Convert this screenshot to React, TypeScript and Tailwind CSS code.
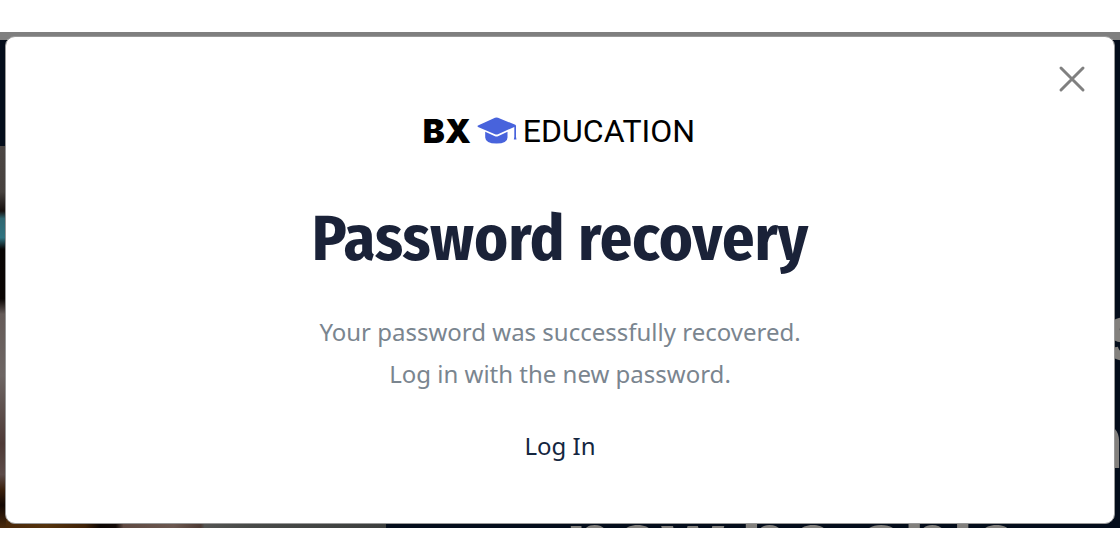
import React from "react";

function Backdrop() {
  return (
    <svg
      aria-hidden="true"
      viewBox="0 0 1120 496"
      preserveAspectRatio="xMidYMid slice"
      className="absolute inset-0 h-full w-full"
    >
      <defs>
        <linearGradient id="photo" x1="0" y1="114" x2="0" y2="496" gradientUnits="userSpaceOnUse">
          <stop offset="0" stopColor="#4b4643" />
          <stop offset="0.12" stopColor="#46413e" />
          <stop offset="0.17" stopColor="#15100e" />
          <stop offset="0.19" stopColor="#2f6670" />
          <stop offset="0.24" stopColor="#2f7380" />
          <stop offset="0.27" stopColor="#080504" />
          <stop offset="0.4" stopColor="#0a0503" />
          <stop offset="0.44" stopColor="#655b58" />
          <stop offset="0.6" stopColor="#6d6563" />
          <stop offset="0.78" stopColor="#4e3a36" />
          <stop offset="0.86" stopColor="#5c4b48" />
          <stop offset="0.9" stopColor="#3a200c" />
          <stop offset="0.94" stopColor="#130703" />
          <stop offset="1" stopColor="#4a2a0c" />
        </linearGradient>
        <linearGradient id="floor" x1="0" y1="0" x2="386" y2="0" gradientUnits="userSpaceOnUse">
          <stop offset="0" stopColor="#482709" />
          <stop offset="0.12" stopColor="#55330d" />
          <stop offset="0.22" stopColor="#3f2208" />
          <stop offset="0.26" stopColor="#0d0603" />
          <stop offset="0.3" stopColor="#120a07" />
          <stop offset="0.32" stopColor="#5f4a42" />
          <stop offset="0.45" stopColor="#6b5850" />
          <stop offset="0.52" stopColor="#4d3b34" />
          <stop offset="0.53" stopColor="#535452" />
          <stop offset="0.65" stopColor="#484a48" />
          <stop offset="1" stopColor="#3d3f3e" />
        </linearGradient>
      </defs>
      <rect width="1120" height="496" fill="#040d1b" />
      <rect width="1120" height="8" fill="#7f7f7f" />
      <rect y="114" width="386" height="382" fill="url(#photo)" />
      <rect x="6" y="480" width="380" height="16" fill="url(#floor)" />
      <g fill="#82807d" fontFamily="Inter, sans-serif" fontWeight="700" fontSize="77">
        <text x="1126" y="328" textAnchor="middle">s</text>
        <text x="1100" y="436" textAnchor="middle">n</text>
        <text x="566" y="536">now</text>
        <text x="741" y="536">be</text>
        <text x="859" y="536">able</text>
      </g>
    </svg>
  );
}

function Logo() {
  return (
    <div className="flex h-10 items-center justify-center pr-0.5 text-black">
      <span className="font-[Inter,sans-serif] text-[33px] leading-10 font-black">BX</span>
      <svg viewBox="0 0 40 28" className="mx-1.5 h-7 w-10" fill="#4863dc" aria-hidden="true">
        <path d="M1 8.500 18 .8Q19.500 .2 21 .8L38.300 7.800Q39 8.200 39 9V20L39.500 22.500H36.800L37.300 20V9.900L21 17.200Q19.500 17.800 18 17.200L1 9.900Q0 9.200 1 8.500Z" />
        <path d="M8.200 14.800 18 19.200Q19.500 19.800 21 19.200L30.500 14.800V20.500Q30.500 26.500 19.500 26.500T8.200 20.500Z" />
      </svg>
      <span className="font-[Roboto,sans-serif] text-[32px] leading-10">EDUCATION</span>
    </div>
  );
}

export default function App() {
  return (
    <main className="min-h-screen bg-white py-8 font-['Noto_Sans',sans-serif]">
      <div className="relative overflow-hidden px-[5px] pt-1 pb-1">
        <Backdrop />
        <section
          role="dialog"
          aria-labelledby="dialog-title"
          className="relative rounded-[10px] border border-[#999999] bg-white px-6 pt-[74px] pb-[58px] text-center"
        >
          <button
            type="button"
            aria-label="Close"
            className="absolute top-7 right-7 flex h-7 w-7 items-center justify-center text-[#808080]"
          >
            <svg viewBox="0 0 28 28" className="h-7 w-7" stroke="currentColor" strokeWidth="3" strokeLinecap="round">
              <path d="M3 3 25 25M25 3 3 25" />
            </svg>
          </button>
          <Logo />
          <h1
            id="dialog-title"
            className="mt-12 font-['Fira_Sans_Condensed',sans-serif] text-[64px] leading-[80px] font-bold text-[#1a2238]"
          >
            Password recovery
          </h1>
          <p className="mt-8 text-[24px] leading-[42px] text-[#7a858f]">
            Your password was successfully recovered.
            <br />
            Log in with the new password.
          </p>
          <a href="#login" className="mt-8 inline-block text-[24px] leading-[38px] text-[#14263f]">
            Log In
          </a>
        </section>
      </div>
    </main>
  );
}
